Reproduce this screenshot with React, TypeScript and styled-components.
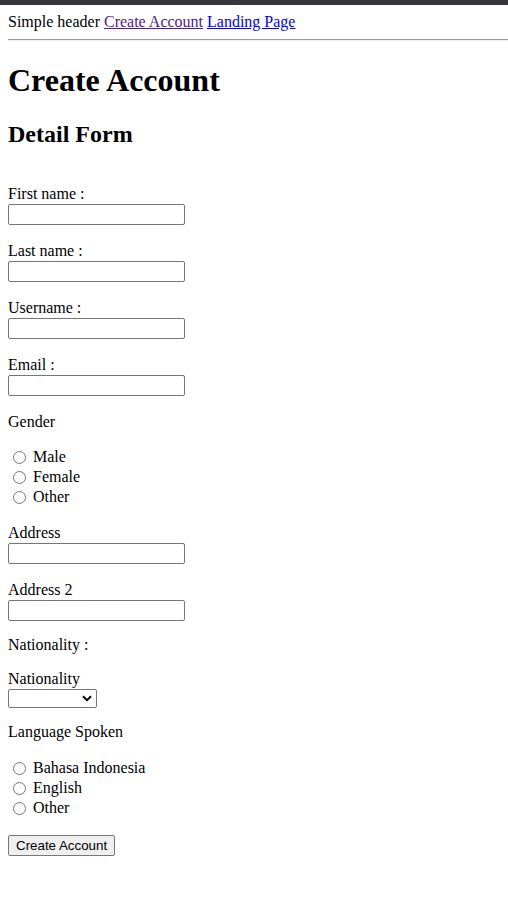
import React from "react";
import styled, { createGlobalStyle } from "styled-components";

const Global = createGlobalStyle`
  html, body { margin: 0; padding: 0; background: #fff; }
  body { font-family: "Liberation Serif", "Times New Roman", serif; font-size: 16px; color: #000; }
`;

const TopBar = styled.div`
  height: 5px;
  background: #36373b;
`;

const Page = styled.div`
  padding: 8px;
`;

const Header = styled.header`
  line-height: 18px;
`;

const NavLink = styled.a<{ $visited?: boolean }>`
  color: ${(p) => (p.$visited ? "#551a8b" : "#0000ee")};
  text-decoration: underline;
`;

const Rule = styled.hr`
  margin: 8px -8px 8px 0;
  border: 0;
  border-top: 1px solid #9a9a9a;
  border-bottom: 1px solid #eeeeee;
  height: 0;
`;

const Title = styled.h1`
  font-size: 32px;
  font-weight: bold;
  margin: 21px 0;
  line-height: 37px;
`;

const Subtitle = styled.h2`
  font-size: 24px;
  font-weight: bold;
  margin: 20px 0 0;
  line-height: 28px;
`;

const Form = styled.form`
  display: flex;
  flex-direction: column;
  align-items: flex-start;
  padding-top: 37px;
`;

const Field = styled.div<{ $gap?: number }>`
  display: flex;
  flex-direction: column;
  align-items: flex-start;
  margin-bottom: ${(p) => p.$gap ?? 17}px;
`;

const Label = styled.label`
  display: block;
  line-height: 18px;
  margin-bottom: 1px;
`;

const TextInput = styled.input`
  box-sizing: border-box;
  width: 177px;
  height: 21px;
  margin: 0;
  padding: 1px 2px;
  border: 1px solid #767676;
  border-radius: 2px;
  font: 13.33px "Liberation Sans", Arial, sans-serif;
  background: #fff;
`;

const SelectWrap = styled.div`
  position: relative;
  width: 89px;
  height: 19px;
`;

const Select = styled.select`
  box-sizing: border-box;
  appearance: none;
  -webkit-appearance: none;
  display: block;
  width: 89px;
  height: 19px;
  margin: 0;
  padding: 0 18px 0 4px;
  border: 1px solid #767676;
  border-radius: 2px;
  background: #fff;
  font: 13.33px "Liberation Sans", Arial, sans-serif;
`;

const Chevron = styled.svg`
  position: absolute;
  right: 5px;
  top: 6px;
  width: 10px;
  height: 7px;
  pointer-events: none;
`;

const GroupTitle = styled.div<{ $gap?: number }>`
  line-height: 18px;
  margin-bottom: ${(p) => p.$gap ?? 16}px;
`;

const RadioList = styled.div`
  display: flex;
  flex-direction: column;
  margin-bottom: 17px;
`;

const RadioRow = styled.label`
  display: flex;
  align-items: center;
  height: 20px;
  line-height: 20px;
`;

const Radio = styled.input`
  width: 13px;
  height: 13px;
  margin: 1px 7px 0 5px;
`;

const Plain = styled.div`
  line-height: 18px;
  margin: -2px 0 16px;
`;

const Button = styled.button`
  box-sizing: border-box;
  height: 21px;
  padding: 1px 7px;
  margin: 0;
  font: 13.33px "Liberation Sans", Arial, sans-serif;
  color: #000;
  background: #efefef;
  border: 1px solid #767676;
  border-radius: 2px;
`;

const TextField = ({ label }: { label: string }) => (
  <Field>
    <Label>{label}</Label>
    <TextInput type="text" />
  </Field>
);

const RadioGroup = ({ name, options }: { name: string; options: string[] }) => (
  <RadioList>
    {options.map((o) => (
      <RadioRow key={o}>
        <Radio type="radio" name={name} />
        {o}
      </RadioRow>
    ))}
  </RadioList>
);

export default function App() {
  return (
    <>
      <Global />
      <TopBar />
      <Page>
        <Header>
          Simple header <NavLink href="#" $visited>Create Account</NavLink>{" "}
          <NavLink href="#">Landing Page</NavLink>
        </Header>
        <Rule />
        <Title>Create Account</Title>
        <Subtitle>Detail Form</Subtitle>
        <Form onSubmit={(e) => e.preventDefault()}>
          <TextField label="First name :" />
          <TextField label="Last name :" />
          <TextField label="Username :" />
          <TextField label="Email :" />
          <GroupTitle>Gender</GroupTitle>
          <RadioGroup name="gender" options={["Male", "Female", "Other"]} />
          <TextField label="Address" />
          <TextField label="Address 2" />
          <Plain>Nationality :</Plain>
          <Field $gap={15}>
            <Label>Nationality</Label>
            <SelectWrap>
              <Select>
                <option value=""></option>
              </Select>
              <Chevron viewBox="0 0 10 7">
                <path d="M1 1.2 L5 5.2 L9 1.2" fill="none" stroke="#000" strokeWidth="2" />
              </Chevron>
            </SelectWrap>
          </Field>
          <GroupTitle $gap={17}>Language Spoken</GroupTitle>
          <RadioGroup name="lang" options={["Bahasa Indonesia", "English", "Other"]} />
          <Button type="submit">Create Account</Button>
        </Form>
      </Page>
    </>
  );
}
